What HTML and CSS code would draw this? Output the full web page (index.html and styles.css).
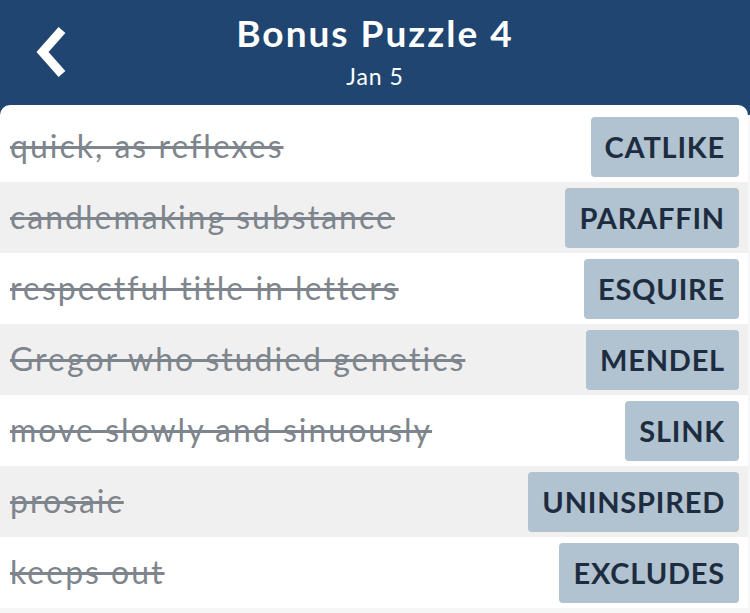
FILE: index.html
```html
<!DOCTYPE html>
<html lang="en">
<head>
    <meta charset="UTF-8">
    <meta name="viewport" content="width=device-width, initial-scale=1.0">
    <title>Bonus Puzzle 4</title>
    <link rel="stylesheet" href="styles.css">
</head>
<body>
    <header class="top-bar">
        <a class="back-btn" href="#" aria-label="Back">
            <svg width="40" height="62" viewBox="0 0 40 62">
                <polyline points="32,10 12.5,32 32,54" fill="none" stroke="#fff" stroke-width="9" stroke-linecap="butt" stroke-linejoin="miter"/>
            </svg>
        </a>
        <div class="title-block">
            <h1>Bonus Puzzle 4</h1>
            <div class="subtitle">Jan 5</div>
        </div>
        <div></div>
    </header>
    <!-- Daftar petunjuk yang sudah terjawab -->
    <div class="clue-list">
        <div class="clue-row">
            <span class="clue">quick, as reflexes</span>
            <span class="answer">CATLIKE</span>
        </div>
        <div class="clue-row">
            <span class="clue">candlemaking substance</span>
            <span class="answer">PARAFFIN</span>
        </div>
        <div class="clue-row">
            <span class="clue">respectful title in letters</span>
            <span class="answer">ESQUIRE</span>
        </div>
        <div class="clue-row">
            <span class="clue">Gregor who studied genetics</span>
            <span class="answer">MENDEL</span>
        </div>
        <div class="clue-row">
            <span class="clue">move slowly and sinuously</span>
            <span class="answer">SLINK</span>
        </div>
        <div class="clue-row">
            <span class="clue">prosaic</span>
            <span class="answer">UNINSPIRED</span>
        </div>
        <div class="clue-row">
            <span class="clue">keeps out</span>
            <span class="answer">EXCLUDES</span>
        </div>
    </div>
</body>
</html>
```

FILE: styles.css
```css
body {
    margin: 0;
    padding: 0;
    font-family: Lato, "Open Sans", sans-serif;
    background-color: #f6f6f6;
    overflow: hidden;
}
.top-bar {
    background-color: #1f4570;
    height: 115px;
    color: #fff;
    display: grid;
    grid-template-columns: 1fr auto 1fr;
}
.back-btn {
    display: block;
    padding: 20px 0 0 30px;
    line-height: 0;
}
.title-block {
    text-align: center;
    padding-top: 11px;
}
h1 {
    margin: 0;
    font-size: 37px;
    font-weight: bold;
    letter-spacing: 2px;
    line-height: 44px;
}
.subtitle {
    font-size: 23px;
    letter-spacing: 1px;
    line-height: 28px;
    margin-top: 7px;
}
.clue-list {
    background-color: #fff;
    margin: -10px 2px 0 0;
    padding-top: 6px;
    border-radius: 10px 10px 0 0;
}
.clue-row {
    display: flex;
    justify-content: space-between;
    align-items: center;
    height: 71px;
    padding: 0 9px 0 10px;
}
.clue-row:nth-child(even) {
    background-color: #f0f0f0;
}
.clue {
    font-size: 32px;
    letter-spacing: 2px;
    color: #7e858c;
    text-decoration: line-through;
    padding-bottom: 2px;
}
.answer {
    background-color: #b1c2d0;
    color: #1d2d3f;
    font-size: 29px;
    font-weight: bold;
    letter-spacing: 0.8px;
    height: 60px;
    line-height: 60px;
    padding: 0 14px;
    border-radius: 4px;
}
```
